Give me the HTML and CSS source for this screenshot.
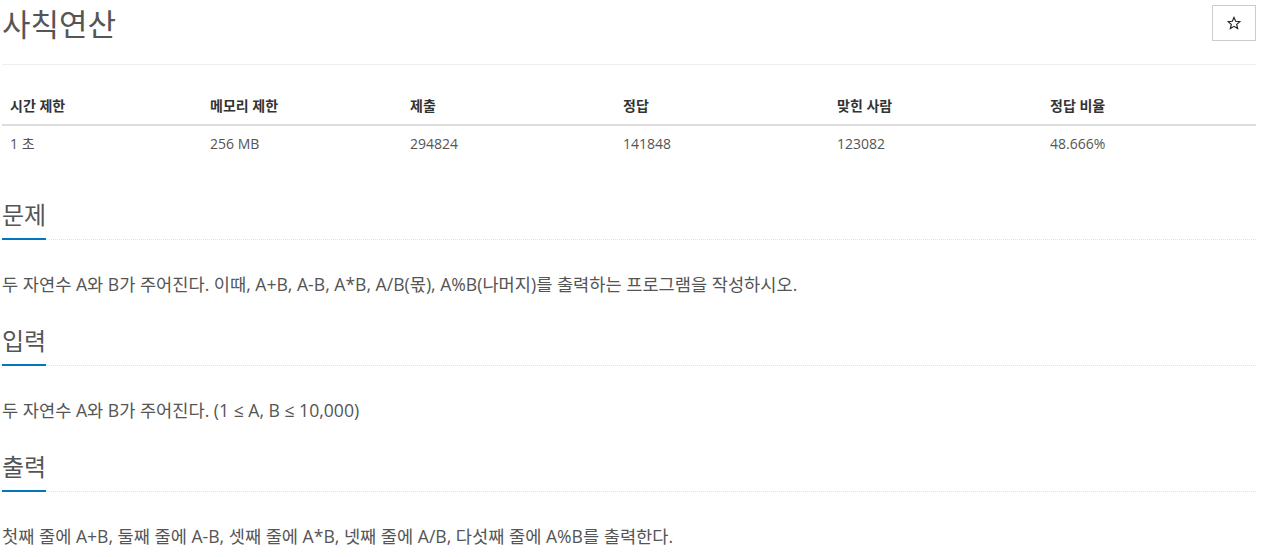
FILE: index.html
```html
<!DOCTYPE html>
<html lang="ko">
<head>
<meta charset="utf-8">
<title>사칙연산</title>
<link rel="stylesheet" href="styles.css">
</head>
<body>
<div class="page">
  <div class="page-header">
    <h1 class="title">사칙연산</h1>
    <button class="star-btn" type="button" aria-label="즐겨찾기">
      <svg width="14" height="14" viewBox="0 0 24 24"><path d="M12 2.5l2.9 6.6 7.1.6-5.4 4.7 1.6 7-6.2-3.7-6.2 3.7 1.6-7L2 9.7l7.1-.6z" fill="none" stroke="#222" stroke-width="2" stroke-linejoin="miter"/></svg>
    </button>
  </div>

  <table class="info">
    <thead>
      <tr>
        <th class="c1">시간 제한</th>
        <th class="c2">메모리 제한</th>
        <th class="c3">제출</th>
        <th class="c4">정답</th>
        <th class="c5">맞힌 사람</th>
        <th>정답 비율</th>
      </tr>
    </thead>
    <tbody>
      <tr>
        <td>1 초</td>
        <td>256 MB</td>
        <td>294824</td>
        <td>141848</td>
        <td>123082</td>
        <td>48.666%</td>
      </tr>
    </tbody>
  </table>

  <section class="section">
    <div class="headline"><h2>문제</h2></div>
    <p class="text">두 자연수 A와 B가 주어진다. 이때, A+B, A-B, A*B, A/B(몫), A%B(나머지)를 출력하는 프로그램을 작성하시오.</p>
  </section>

  <section class="section">
    <div class="headline"><h2>입력</h2></div>
    <p class="text">두 자연수 A와 B가 주어진다. (1 ≤ A, B ≤ 10,000)</p>
  </section>

  <section class="section">
    <div class="headline"><h2>출력</h2></div>
    <p class="text">첫째 줄에 A+B, 둘째 줄에 A-B, 셋째 줄에 A*B, 넷째 줄에 A/B, 다섯째 줄에 A%B를 출력한다.</p>
  </section>
</div>
</body>
</html>
```

FILE: styles.css
```css
* { box-sizing: border-box; }

html, body {
  margin: 0;
  padding: 0;
  background: #fff;
}

body {
  font-family: "Open Sans", "Noto Sans CJK KR", sans-serif;
  color: #555;
  font-size: 14px;
  line-height: 20px;
}

.page {
  padding: 0 9px 0 2px;
}

.page-header {
  display: flex;
  justify-content: space-between;
  align-items: flex-start;
  padding-bottom: 22px;
  border-bottom: 1px solid #eee;
}

.title {
  margin: 6px 0 0 0;
  font-size: 31px;
  line-height: 36px;
  font-weight: 400;
  color: #555;
}

.star-btn {
  margin-top: 5px;
  width: 44px;
  height: 36px;
  border: 1px solid #ccc;
  background: #fff;
  border-radius: 0;
  padding: 0;
  display: flex;
  align-items: center;
  justify-content: center;
}

.info {
  width: 100%;
  border-collapse: collapse;
  table-layout: fixed;
  margin-top: 23px;
  margin-bottom: 41px;
}

.info th,
.info td {
  text-align: left;
  padding: 8px 8px;
  line-height: 20px;
  font-size: 14px;
}

.info th {
  font-weight: 700;
  color: #333;
  border-bottom: 2px solid #ddd;
}

.info td {
  color: #555;
}

.info .c1 { width: 200px; }
.info .c2 { width: 200px; }
.info .c3 { width: 213px; }
.info .c4 { width: 214px; }
.info .c5 { width: 213px; }

.section {
  margin-bottom: 32px;
}

.headline {
  display: flex;
  border-bottom: 1px dotted #dde2ea;
}

.headline h2 {
  margin: 0 0 -1px 0;
  padding-bottom: 11px;
  font-size: 24px;
  line-height: 24px;
  font-weight: 400;
  color: #555;
  border-bottom: 2px solid #0076c0;
}

.text {
  margin: 31px 0 0 0;
  font-size: 17.6px;
  line-height: 26px;
  color: #555;
}
```
